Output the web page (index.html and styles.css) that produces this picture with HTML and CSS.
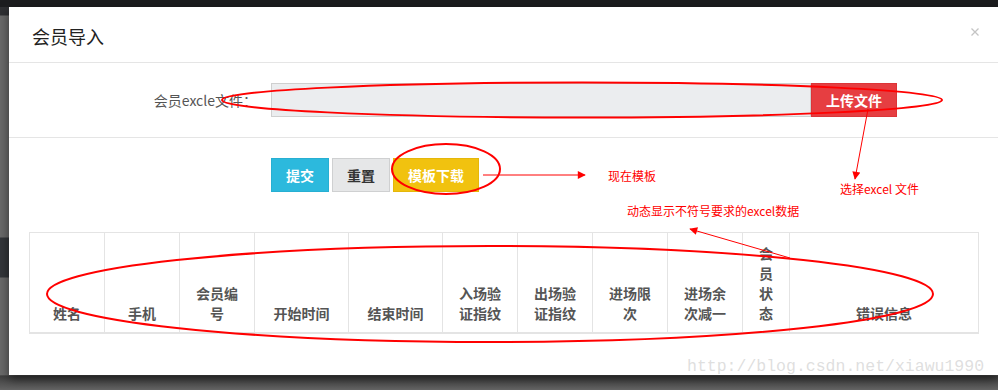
FILE: index.html
```html
<!DOCTYPE html>
<html lang="zh-CN">
<head>
    <meta charset="UTF-8">
    <title>会员导入</title>
    <link rel="stylesheet" href="styles.css">
</head>
<body>

    <div class="topbar"></div>

    <div class="stage">
        <div class="sidebar"></div>

        <div class="modal">
            <div class="modal-header">
                <h4 class="modal-title">会员导入</h4>
                <span class="close">
                    <svg width="8" height="8" viewBox="0 0 8 8"><path d="M0.5 0.5 L7.5 7.5 M7.5 0.5 L0.5 7.5" stroke="#c4c4c4" stroke-width="1.3" fill="none"/></svg>
                </span>
            </div>

            <div class="upload-row">
                <label class="upload-label">会员excle文件：</label>
                <div class="file-input"></div>
                <button class="btn btn-upload">上传文件</button>
            </div>

            <div class="result">
                <div class="actions">
                    <button class="btn btn-submit">提交</button>
                    <button class="btn btn-reset">重置</button>
                    <button class="btn btn-template">模板下载</button>
                </div>

                <table class="error-table">
                    <colgroup>
                        <col style="width:75px">
                        <col style="width:75px">
                        <col style="width:75px">
                        <col style="width:94px">
                        <col style="width:94px">
                        <col style="width:75px">
                        <col style="width:75px">
                        <col style="width:75px">
                        <col style="width:75px">
                        <col style="width:47px">
                        <col>
                    </colgroup>
                    <thead>
                        <tr>
                            <th>姓名</th>
                            <th>手机</th>
                            <th>会员编号</th>
                            <th>开始时间</th>
                            <th>结束时间</th>
                            <th>入场验证指纹</th>
                            <th>出场验证指纹</th>
                            <th>进场限次</th>
                            <th>进场余次减一</th>
                            <th>会员状态</th>
                            <th>错误信息</th>
                        </tr>
                    </thead>
                </table>
            </div>
        </div>
    </div>

    <!-- annotations drawn over the screenshot -->
    <svg class="notes" width="998" height="390" viewBox="0 0 998 390">
        <defs>
            <marker id="head" viewBox="0 0 10 10" refX="9" refY="5" markerWidth="10" markerHeight="8" markerUnits="userSpaceOnUse" orient="auto">
                <path d="M0 0 L10 5 L0 10 z" fill="#ff0000"/>
            </marker>
        </defs>
        <ellipse cx="582" cy="100" rx="360" ry="17.5" fill="none" stroke="#ff0000" stroke-width="2"/>
        <ellipse cx="446" cy="169" rx="54" ry="25" fill="none" stroke="#ff0000" stroke-width="2"/>
        <ellipse cx="490" cy="294" rx="443" ry="48" fill="none" stroke="#ff0000" stroke-width="2"/>

        <line x1="868" y1="109" x2="855" y2="179" stroke="#ff0000" stroke-width="1" marker-end="url(#head)"/>
        <line x1="483" y1="175" x2="585" y2="175" stroke="#ff0000" stroke-width="1" marker-end="url(#head)"/>
        <line x1="790" y1="258" x2="690" y2="229" stroke="#ff0000" stroke-width="1" marker-end="url(#head)"/>

        <text class="note-text" x="608" y="181">现在模板</text>
        <text class="note-text" x="840" y="194">选择excel 文件</text>
        <text class="note-text" x="627" y="216">动态显示不符号要求的excel数据</text>
    </svg>

    <div class="watermark">http://blog.csdn.net/xiawu1990</div>

</body>
</html>
```

FILE: styles.css
```css
body {
    margin: 0;
    padding: 0;
    width: 998px;
    height: 390px;
    overflow: hidden;
    position: relative;
    background: linear-gradient(to bottom, #5c5c5c 0, #5c5c5c 375px, #3f3f3f 376px, #646464 390px);
    font-family: "Noto Sans CJK SC", "Liberation Sans", sans-serif;
    color: #333;
}

.topbar {
    height: 7px;
    background-color: #1c1d1f;
}

.stage {
    display: flex;
}

.sidebar {
    width: 9px;
    height: 368px;
    background: linear-gradient(to bottom, #2f3033 0, #2f3033 8px, #6a6a6a 9px, #6a6a6a 230px, #33363a 231px, #33363a 270px, #6a6a6a 271px);
}

.modal {
    flex: 1;
    height: 368px;
    background-color: #fff;
    box-shadow: 0 4px 10px rgba(0, 0, 0, 0.55);
    position: relative;
    z-index: 1;
}

.modal-header {
    height: 56px;
    box-sizing: border-box;
    padding: 0 19px 0 23px;
    display: flex;
    justify-content: space-between;
    align-items: center;
    border-bottom: 1px solid #e5e5e5;
}

.modal-title {
    margin: 0;
    padding-top: 3px;
    font-size: 18px;
    font-weight: 400;
    color: #222;
}

.close {
    align-self: flex-start;
    margin-top: 21px;
    line-height: 0;
}

.upload-row {
    display: flex;
    align-items: center;
    padding: 20px 0;
    border-bottom: 1px solid #e5e5e5;
}

.upload-label {
    width: 248px;
    margin-right: 14px;
    text-align: right;
    font-size: 14px;
    color: #555;
}

.file-input {
    width: 538px;
    height: 32px;
    background-color: #ebedef;
    border: 1px solid #cfcfcf;
}

.btn {
    height: 34px;
    padding: 0;
    border: 1px solid transparent;
    font-family: "Noto Sans CJK SC", sans-serif;
    font-size: 14px;
    font-weight: 700;
    color: #fff;
    cursor: pointer;
}

.btn-upload {
    width: 86px;
    background-color: #e63e41;
    border-color: #dc3538;
}

.result {
    padding: 20px 19px 0 20px;
}

.actions {
    display: flex;
    gap: 3px;
    margin-left: 242px;
    margin-bottom: 40px;
}

.btn-submit {
    width: 58px;
    background-color: #2cb9dd;
    border-color: #27afd2;
}

.btn-reset {
    width: 58px;
    background-color: #e6e7e8;
    border-color: #cfd0d1;
    color: #333;
}

.btn-template {
    width: 86px;
    background-color: #f1c20f;
    border-color: #e5b70a;
}

.error-table {
    width: 950px;
    table-layout: fixed;
    border-collapse: collapse;
}

.error-table th {
    border: 1px solid #e4e4e4;
    border-bottom: 2px solid #e4e4e4;
    padding: 10px 10px 9px;
    font-size: 14px;
    line-height: 20px;
    font-weight: 700;
    color: #555;
    text-align: center;
    vertical-align: bottom;
}

.notes {
    position: absolute;
    top: 0;
    left: 0;
    z-index: 5;
    pointer-events: none;
}

.note-text {
    font-family: "Noto Sans CJK SC", sans-serif;
    font-size: 12px;
    fill: #ff0000;
}

.watermark {
    position: absolute;
    left: 687px;
    top: 357px;
    z-index: 4;
    font-family: "Liberation Mono", monospace;
    font-size: 16.5px;
    color: rgba(205, 205, 205, 0.65);
}
```
